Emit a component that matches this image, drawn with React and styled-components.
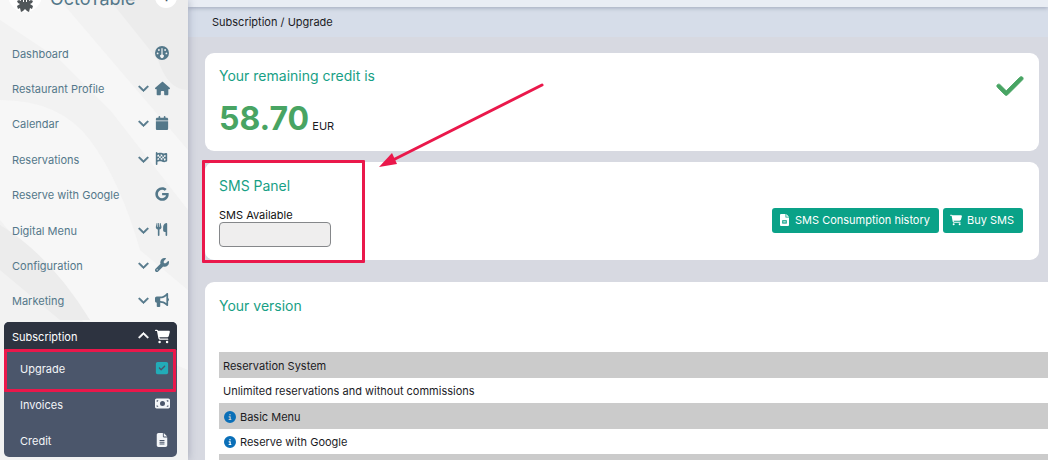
import React, { useState } from 'react';
import styled, { createGlobalStyle, css } from 'styled-components';
import {
  FaBullhorn, FaCalendar, FaCartShopping, FaCheck, FaChevronDown, FaChevronUp,
  FaCircleInfo, FaFileLines, FaFlagCheckered, FaGoogle, FaHouse, FaMoneyBill,
  FaSquareCheck, FaUtensils, FaWrench,
} from 'react-icons/fa6';

const accent = '#ea184b';

const GlobalStyle = createGlobalStyle`
  * {
    box-sizing: border-box;
  }

  body {
    margin: 0;
    overflow: hidden;
    background: #d7d9e1;
    color: #1b1b1f;
    font-family: Inter, 'Liberation Sans', sans-serif;
    font-size: 11px;
    line-height: 16px;
  }

  h2, ul {
    margin: 0;
    padding: 0;
    font-weight: 400;
  }

  li {
    list-style: none;
  }
`;

const Layout = styled.div`
  display: flex;
  height: 100vh;
  overflow: hidden;
`;

const Sidebar = styled.aside`
  position: relative;
  flex: 0 0 188px;
  overflow: hidden;
  background: #f2f2f2;
  box-shadow: 0 0 8px rgba(60, 70, 100, 0.35);
  z-index: 1;
`;

const Texture = styled.svg`
  position: absolute;
  inset: 0;
  width: 100%;
  height: 100%;
`;

const SidebarContent = styled.div`
  position: relative;
`;

const Brand = styled.div`
  display: flex;
  align-items: flex-end;
  gap: 8px;
  height: 12px;
  margin-bottom: 24px;
  padding: 0 11px 0 8px;
`;

const Logo = styled.span`
  display: flex;
  align-items: flex-end;
  justify-content: center;
  flex: none;
  width: 34px;
  height: 34px;
  border-radius: 50%;
  background: #fff;
`;

const BrandName = styled.span`
  flex: 1;
  color: #54788a;
  font-size: 18px;
  line-height: 26px;
`;

const BrandButton = styled.button`
  flex: none;
  width: 22px;
  height: 22px;
  padding: 0;
  margin-bottom: 4px;
  border: none;
  border-radius: 50%;
  background: #fff;
  color: #46586a;
  font: inherit;
  font-weight: 700;
  line-height: 22px;
`;

const Menu = styled.ul`
  display: grid;
  grid-auto-rows: 1fr;
  height: 283px;
`;

const menuItem = css`
  display: flex;
  align-items: center;
  gap: 6px;
  text-decoration: none;

  span {
    flex: 1;
  }
`;

const MenuLink = styled.a`
  ${menuItem}
  height: 100%;
  padding: 0 17px 0 12px;
  color: #54788a;
`;

const IconSlot = styled.i`
  display: flex;
  width: 16px;
  padding-bottom: 2px;
  font-size: ${props => props.$size || '14px'};

  svg {
    flex: none;
  }
`;

const chevron = css`
  height: 14px;
  padding-bottom: 2px;
  stroke: currentColor;
  stroke-width: 36px;
`;

const ChevronDown = styled(FaChevronDown)`
  ${chevron}
`;

const ChevronUp = styled(FaChevronUp)`
  ${chevron}
`;

const SubMenu = styled.section`
  margin: 3px 11px 0 4px;
  border-radius: 5px;
  overflow: hidden;
  background: #4b566b;
`;

const SubMenuToggle = styled.button`
  ${menuItem}
  width: 100%;
  height: 28px;
  padding: 2px 6px 0 8px;
  border: none;
  background: #2d3340;
  color: #fff;
  font: inherit;
  text-align: left;
`;

const SubMenuList = styled.ul`
  display: grid;
  grid-auto-rows: 1fr;
  height: 107px;
`;

const SubMenuLink = styled.a`
  ${menuItem}
  position: relative;
  height: 100%;
  padding: 3px 6px 0 16px;
  color: #f3f5f8;
`;

const Highlight = styled.b`
  position: absolute;
  inset: ${props => props.$inset};
  width: ${props => props.$width || 'auto'};
  border: 3px solid ${accent};
  border-radius: 1px;
  pointer-events: none;
`;

const Main = styled.main`
  flex: 1;
  min-width: 0;
`;

const TopBar = styled.header`
  position: relative;
  height: 7px;
  background: #e9edf4;
  box-shadow: 0 1px 4px rgba(60, 70, 100, 0.35);
`;

const Breadcrumb = styled.nav`
  padding: 7px 24px;
  background: #d6dde9;

  a {
    color: inherit;
    text-decoration: none;
  }
`;

const Content = styled.div`
  display: flex;
  flex-direction: column;
  padding: 16px 0 0 17px;
`;

const Card = styled.section`
  position: relative;
  min-height: 98px;
  margin: 0 9px 11px 0;
  padding: 13px 14px;
  border-radius: 9px;
  background: #fff;
`;

const CreditCard = styled(Card)`
  display: flex;
  justify-content: space-between;
  padding-bottom: 0;
`;

const CreditCheck = styled(FaCheck)`
  margin: 5px 0;
  color: #48a463;
  font-size: 30px;
  stroke: currentColor;
  stroke-width: 16px;
`;

const SmsCard = styled(Card)`
  display: flex;
  align-items: center;
  justify-content: space-between;
  padding-right: 16px;
`;

const VersionCard = styled(Card)`
  margin: 11px 0 0;
  padding-top: 14px;
  padding-right: 0;
  border-radius: 9px 0 0 0;
`;

const Title = styled.h2`
  color: #17a085;
  font-size: 14px;
  line-height: 20px;
`;

const Amount = styled.p`
  margin: 13px 0 0;
  line-height: 40px;

  strong {
    color: #48a463;
    font-size: 32px;
    font-weight: 700;
  }
`;

const Field = styled.div`
  display: flex;
  flex-direction: column;
  margin-top: 12px;

  label {
    line-height: 14px;
    color: #111;
  }

  input {
    width: 112px;
    height: 25px;
    border: 1px solid #85878a;
    border-radius: 4px;
    background: #efeeee;
  }
`;

const Actions = styled.div`
  display: flex;
  gap: 4px;
  padding-top: 18px;
`;

const ActionButton = styled.button`
  display: flex;
  align-items: center;
  gap: 5px;
  height: 25px;
  padding: 0 9px 0 7px;
  border: none;
  border-radius: 3px;
  background: #0aa288;
  color: #fff;
  font: inherit;

  svg {
    font-size: 12px;
  }
`;

const Arrow = styled.svg`
  position: absolute;
  top: 30px;
  left: 174px;
  width: 166px;
  height: 86px;
  z-index: 1;
`;

const FeatureTable = styled.table`
  width: 100%;
  margin-top: 36px;
  border-collapse: collapse;

  td {
    height: 26px;
    padding: 2px 4px 0;
  }

  tr:nth-child(even) td {
    height: 25px;
    padding-top: 0;
  }

  tr:nth-child(odd) {
    background: #cbcbcb;
  }
`;

const Feature = styled.div`
  display: flex;
  align-items: center;
  gap: 4px;
  padding-left: ${props => (props.$info ? '1px' : '0')};

  svg {
    color: #0a6fb8;
    font-size: 12px;
  }
`;

const GaugeIcon = () => (
  <svg width="14" height="14" viewBox="0 0 14 14">
    <circle cx="7" cy="7" r="7" fill="currentColor" />
    <g fill="#f3f3f3">
      <circle cx="2.6" cy="7.4" r="0.9" />
      <circle cx="3.9" cy="4" r="0.9" />
      <circle cx="10.1" cy="4" r="0.9" />
      <circle cx="11.4" cy="7.4" r="0.9" />
      <path d="M6.4 2.2h1.2v6.2a1.8 1.8 0 1 1-1.2 0z" />
    </g>
  </svg>
);

const HistoryIcon = () => (
  <svg width="11" height="12" viewBox="0 0 11 12">
    <path d="M2 0h4.5v3.5H10V11a1 1 0 0 1-1 1H2a1 1 0 0 1-1-1V1a1 1 0 0 1 1-1z" fill="currentColor" />
    <path d="M7.3 0 10 2.7H7.3z" fill="currentColor" />
    <path d="M3.2 6.2h4.6v3.4H3.2z" fill="#0aa288" />
    <path d="M4.2 7.4h2.6v1H4.2z" fill="currentColor" />
  </svg>
);

const OctopusIcon = () => (
  <svg width="18" height="20" viewBox="0 0 18 20">
    <path
      d="M5 2h8v7l2-1 2 1-1 2-2 1 3 2-1 3-2-1-1 4-2-1-2-2-2 2-2 1-1-4-2 1-1-3 3-2-2-1-1-2 2-1 2 1z"
      fill="#505659"
    />
    <path d="M7 8h1v2H7zM10 8h1v2h-1z" fill="#fff" />
  </svg>
);

const menu = [
  { label: 'Dashboard', icon: GaugeIcon },
  { label: 'Restaurant Profile', icon: FaHouse, expandable: true, size: '15px' },
  { label: 'Calendar', icon: FaCalendar, expandable: true },
  { label: 'Reservations', icon: FaFlagCheckered, expandable: true, size: '13px' },
  { label: 'Reserve with Google', icon: FaGoogle },
  { label: 'Digital Menu', icon: FaUtensils, expandable: true, size: '13px' },
  { label: 'Configuration', icon: FaWrench, expandable: true, size: '14px' },
  { label: 'Marketing', icon: FaBullhorn, expandable: true },
];

const subMenu = [
  { label: 'Upgrade', icon: FaSquareCheck, color: '#22acb8', active: true },
  { label: 'Invoices', icon: FaMoneyBill, size: '15px' },
  { label: 'Credit', icon: FaFileLines },
];

const features = [
  { name: 'Reservation System' },
  { name: 'Unlimited reservations and without commissions' },
  { name: 'Basic Menu', info: true },
  { name: 'Reserve with Google', info: true },
  { name: '' },
];

export default function App() {
  const [open, setOpen] = useState(true);

  return (
    <Layout>
      <GlobalStyle />
      <Sidebar>
        <Texture viewBox="0 0 188 460" preserveAspectRatio="none" aria-hidden="true">
          <path d="M0 0h60l128 150v60L110 110 60 60 0 20z" fill="#f7f7f7" />
          <path d="M110 0h78v90q-20 0-30-30z" fill="#ececec" />
          <path d="M0 100q60 0 90 40t50 110l48 40v80L90 330 0 220z" fill="#f7f7f7" />
          <path d="M0 225q50 30 90 95H60L0 270z" fill="#ececec" />
        </Texture>
        <SidebarContent>
          <Brand>
            <Logo><OctopusIcon /></Logo>
            <BrandName>OctoTable</BrandName>
            <BrandButton type="button">⋮</BrandButton>
          </Brand>
          <Menu>
            {menu.map(({ label, icon: Icon, expandable, size }) => (
              <li key={label}>
                <MenuLink href="#">
                  <span>{label}</span>
                  {expandable && <ChevronDown />}
                  <IconSlot $size={size}><Icon /></IconSlot>
                </MenuLink>
              </li>
            ))}
          </Menu>
          <SubMenu>
            <SubMenuToggle type="button" onClick={() => setOpen(!open)}>
              <span>Subscription</span>
              <ChevronUp />
              <IconSlot $size="15px"><FaCartShopping /></IconSlot>
            </SubMenuToggle>
            {open && (
              <SubMenuList>
                {subMenu.map(({ label, icon: Icon, color, size, active }) => (
                  <li key={label}>
                    <SubMenuLink href="#">
                      <span>{label}</span>
                      <IconSlot $size={size}><Icon color={color} /></IconSlot>
                      {active && <Highlight $inset="-1px 1px -6px 0" />}
                    </SubMenuLink>
                  </li>
                ))}
              </SubMenuList>
            )}
          </SubMenu>
        </SidebarContent>
      </Sidebar>

      <Main>
        <TopBar />
        <Breadcrumb>
          <a href="#">Subscription</a> / <a href="#">Upgrade</a>
        </Breadcrumb>
        <Content>
          <CreditCard>
            <div>
              <Title>Your remaining credit is</Title>
              <Amount><strong>58.70</strong> EUR</Amount>
            </div>
            <CreditCheck />
            <Arrow viewBox="0 0 166 86" aria-hidden="true">
              <path d="M163 2 14 77" stroke={accent} strokeWidth="3" strokeLinecap="round" />
              <path d="M0 84 13 70l5 11z" fill={accent} />
            </Arrow>
          </CreditCard>

          <SmsCard>
            <div>
              <Title>SMS Panel</Title>
              <Field>
                <label htmlFor="sms-available">SMS Available</label>
                <input id="sms-available" type="text" readOnly />
              </Field>
            </div>
            <Actions>
              <ActionButton type="button"><HistoryIcon /> SMS Consumption history</ActionButton>
              <ActionButton type="button"><FaCartShopping /> Buy SMS</ActionButton>
            </Actions>
            <Highlight $inset="-2px auto -3px -3px" $width="163px" />
          </SmsCard>

          <VersionCard>
            <Title>Your version</Title>
            <FeatureTable>
              <tbody>
                {features.map(({ name, info }) => (
                  <tr key={name}>
                    <td>
                      <Feature $info={info}>
                        {info && <FaCircleInfo />}
                        {name}
                      </Feature>
                    </td>
                  </tr>
                ))}
              </tbody>
            </FeatureTable>
          </VersionCard>
        </Content>
      </Main>
    </Layout>
  );
}
